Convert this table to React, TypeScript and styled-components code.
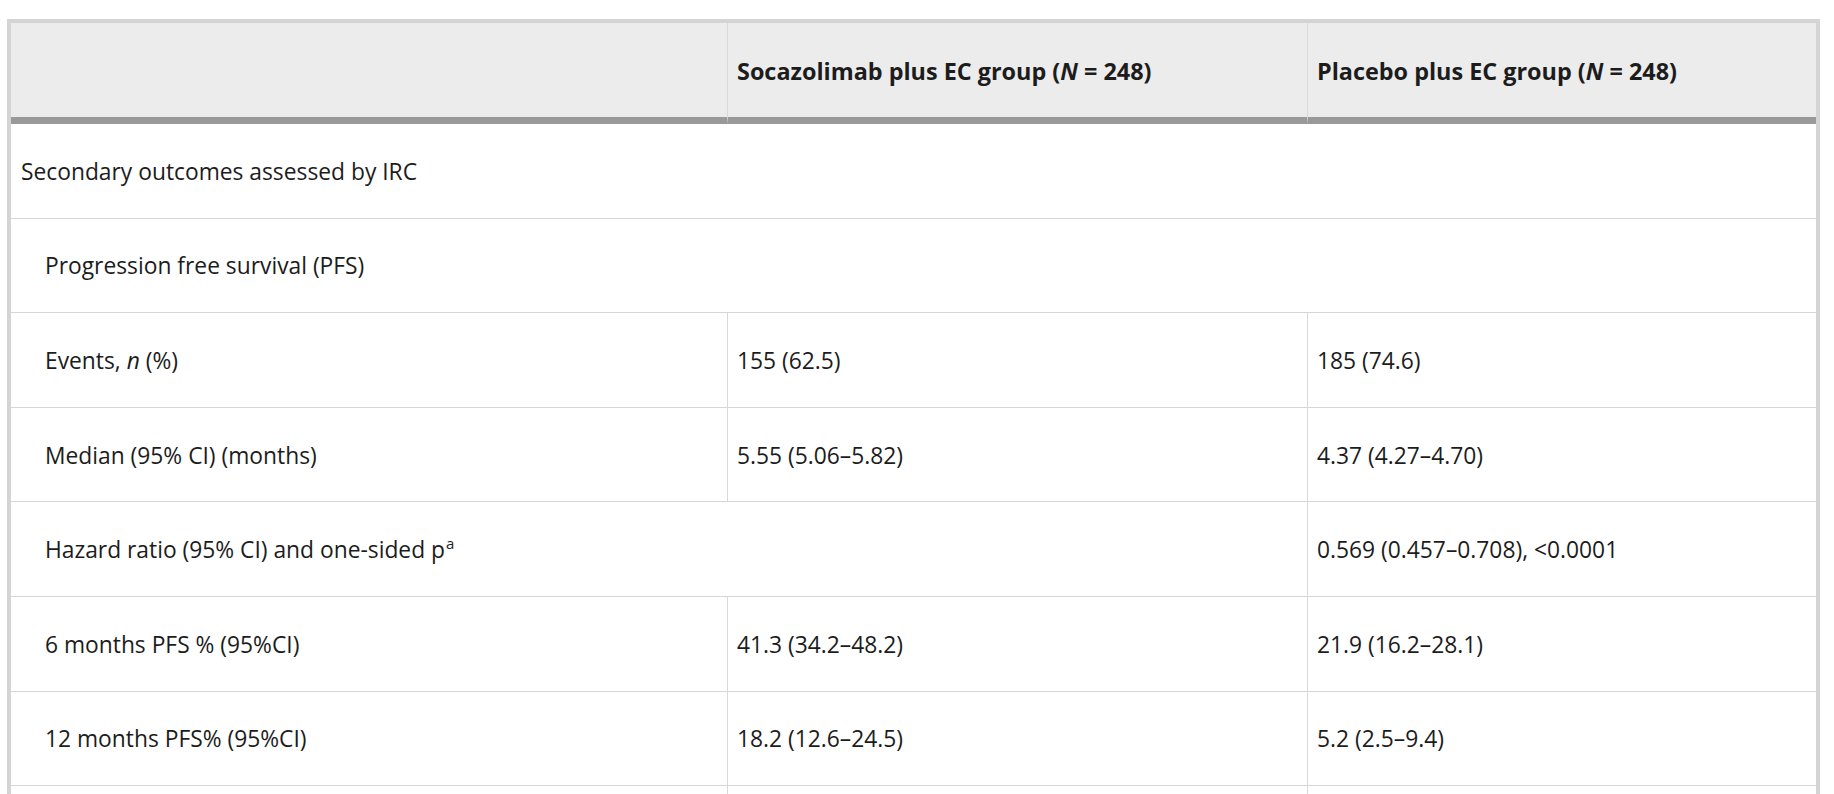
import React from "react";
import styled, { createGlobalStyle } from "styled-components";

const GlobalStyle = createGlobalStyle`
  html, body {
    margin: 0;
    padding: 0;
    background: #ffffff;
    overflow: hidden;
  }
  body {
    font-family: "Open Sans", "Noto Sans", "Liberation Sans", sans-serif;
    color: #1c1c1c;
  }
`;

const Page = styled.div`
  padding: 19px 14px 0 7px;
  height: 794px;
  box-sizing: border-box;
  overflow: hidden;
`;

const Table = styled.table`
  width: 1813px;
  table-layout: fixed;
  border-collapse: separate;
  border-spacing: 0;
  border: 4px solid #d4d4d4;
  font-size: 22.8px;
  line-height: 34px;
  box-sizing: border-box;
`;

const HeadCell = styled.th<{ $w: number; $first?: boolean }>`
  box-sizing: border-box;
  width: ${(p) => p.$w}px;
  background: #ececec;
  font-weight: 700;
  font-size: 23.4px;
  text-align: left;
  padding: 31px 8px 29px 9px;
  border-bottom: 7px solid #999999;
  border-left: ${(p) => (p.$first ? "none" : "1px solid #d9d9d9")};
  white-space: nowrap;
`;

const Cell = styled.td<{ $indent?: boolean; $first?: boolean }>`
  box-sizing: border-box;
  padding: 30.8px 10px 28.8px ${(p) => (p.$indent ? 34 : p.$first ? 10 : 9)}px;
  border-bottom: 1px solid #d6d6d6;
  border-left: ${(p) => (p.$first ? "none" : "1px solid #d9d9d9")};
  font-weight: 400;
  vertical-align: middle;
  white-space: nowrap;
`;

const Sup = styled.sup`
  font-size: 0.66em;
  line-height: 0;
  vertical-align: 0.6em;
  margin-left: 1px;
`;

type DataRow = { label: React.ReactNode; a: string; b: string };

const dataRows: DataRow[] = [
  { label: <>Events, <i>n</i> (%)</>, a: "155 (62.5)", b: "185 (74.6)" },
  { label: "Median (95% CI) (months)", a: "5.55 (5.06–5.82)", b: "4.37 (4.27–4.70)" },
];

const lateRows: DataRow[] = [
  { label: "6 months PFS % (95%CI)", a: "41.3 (34.2–48.2)", b: "21.9 (16.2–28.1)" },
  { label: "12 months PFS% (95%CI)", a: "18.2 (12.6–24.5)", b: "5.2 (2.5–9.4)" },
];

const Row = ({ r }: { r: DataRow }) => (
  <tr>
    <Cell $first $indent>{r.label}</Cell>
    <Cell>{r.a}</Cell>
    <Cell>{r.b}</Cell>
  </tr>
);

export default function App() {
  return (
    <>
      <GlobalStyle />
      <Page>
        <Table>
          <thead>
            <tr>
              <HeadCell $w={716} $first></HeadCell>
              <HeadCell $w={580}>
                Socazolimab plus EC group (<i>N</i> = 248)
              </HeadCell>
              <HeadCell $w={509}>
                Placebo plus EC group (<i>N</i> = 248)
              </HeadCell>
            </tr>
          </thead>
          <tbody>
            <tr>
              <Cell $first colSpan={3}>Secondary outcomes assessed by IRC</Cell>
            </tr>
            <tr>
              <Cell $first $indent colSpan={3}>Progression free survival (PFS)</Cell>
            </tr>
            {dataRows.map((r, i) => (
              <Row key={i} r={r} />
            ))}
            <tr>
              <Cell $first $indent colSpan={2}>
                Hazard ratio (95% CI) and one-sided p<Sup>a</Sup>
              </Cell>
              <Cell>0.569 (0.457–0.708), &lt;0.0001</Cell>
            </tr>
            {lateRows.map((r, i) => (
              <Row key={i} r={r} />
            ))}
            <tr>
              <Cell $first $indent>&nbsp;</Cell>
              <Cell>&nbsp;</Cell>
              <Cell>&nbsp;</Cell>
            </tr>
          </tbody>
        </Table>
      </Page>
    </>
  );
}
